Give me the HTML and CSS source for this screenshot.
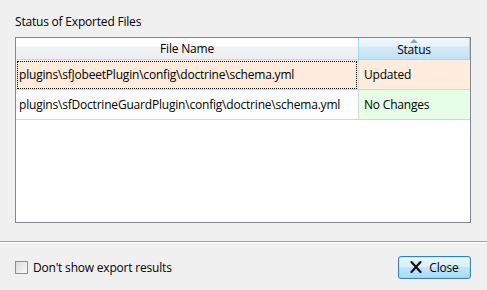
FILE: index.html
```html
<!DOCTYPE html>
<html lang="en">
<head>
    <meta charset="UTF-8">
    <title>Export Results</title>
    <link rel="stylesheet" href="styles.css">
</head>
<body>
    <div class="dialog">
        <div class="content">
            <div class="caption">Status of Exported Files</div>

            <!-- results list -->
            <div class="grid">
                <div class="row head">
                    <div class="cell name">File Name</div>
                    <div class="cell status sorted">
                        <span class="arrow"></span>
                        Status
                    </div>
                </div>
                <div class="row">
                    <div class="cell name focus">plugins\sfJobeetPlugin\config\doctrine\schema.yml</div>
                    <div class="cell status updated">Updated</div>
                </div>
                <div class="row">
                    <div class="cell name">plugins\sfDoctrineGuardPlugin\config\doctrine\schema.yml</div>
                    <div class="cell status same">No Changes</div>
                </div>
            </div>
        </div>

        <div class="footer">
            <label class="check">
                <span class="box"></span>
                Don't show export results
            </label>
            <button class="btn">
                <svg width="12" height="12" viewBox="0 0 12 12">
                    <path d="M1.5 1 L10.5 11 M10.5 1 L1.5 11" stroke="#111" stroke-width="2.2" stroke-linecap="round"/>
                </svg>
                Close
            </button>
        </div>
    </div>
</body>
</html>
```

FILE: styles.css
```css
body {
    margin: 0;
    padding: 0;
    background-color: #f0f0f0;
    font-family: "Open Sans", "Noto Sans", sans-serif;
    font-size: 12px;
    letter-spacing: -0.2px;
    color: #000;
}
* {
    box-sizing: border-box;
}
.dialog {
    width: 487px;
    height: 290px;
    display: flex;
    flex-direction: column;
}
.content {
    padding: 13px 16px 0 15px;
}
.caption {
    height: 17px;
    line-height: 17px;
    margin-bottom: 7px;
}
.grid {
    height: 186px;
    border: 1px solid #828790;
    background: #fff;
}
.row {
    display: flex;
    height: 30px;
}
.cell {
    border-bottom: 1px solid #d5d5d5;
    line-height: 29px;
    padding-left: 3px;
    white-space: nowrap;
}
.name {
    width: 342px;
}
.status {
    flex: 1;
    border-left: 1px solid #d5d5d5;
    padding-left: 5px;
}
.head {
    height: 22px;
}
.head .cell {
    line-height: 20px;
    text-align: center;
    padding: 1px 0 0;
    background: linear-gradient(#ffffff 0%, #ffffff 40%, #f1f2f4 41%, #eceef1 100%);
    border-bottom: 1px solid #d5d5d5;
}
.head .sorted {
    position: relative;
    border: 1px solid #96d9f9;
    border-top: 0;
    padding-top: 2px;
    background: linear-gradient(#f2f9fd 0%, #e4f3fb 40%, #d4ebf8 41%, #c4e2f5 100%);
}
.arrow {
    position: absolute;
    left: 50%;
    top: 1px;
    margin-left: -4px;
    border-left: 4px solid transparent;
    border-right: 4px solid transparent;
    border-bottom: 4px solid #8ba6c0;
}
.focus {
    background: #fdebdc;
    outline: 1px dotted #000;
    outline-offset: -2px;
}
.updated {
    background: #feecdd;
}
.same {
    background: #e6fde6;
}
.footer {
    border-top: 1px solid #a0a0a0;
    box-shadow: inset 0 1px 0 #fff;
    margin-top: 18px;
    flex: 1;
    display: flex;
    justify-content: space-between;
    align-items: center;
    padding: 2px 16px 0 15px;
}
.check {
    display: flex;
    align-items: center;
    gap: 5px;
}
.box {
    width: 13px;
    height: 13px;
    border: 1px solid #8e8f8f;
    background: linear-gradient(135deg, #dcdcdc, #f8f8f8);
}
.btn {
    width: 73px;
    height: 23px;
    border: 1px solid #3c7fb1;
    border-radius: 3px;
    background: linear-gradient(#eaf6fd 0%, #d9f0fc 45%, #bee6fd 50%, #a7d9f5 100%);
    box-shadow: inset 0 0 0 1px #6bd3fd44;
    font-family: inherit;
    font-size: 12px;
    letter-spacing: -0.2px;
    display: flex;
    align-items: center;
    justify-content: center;
    gap: 7px;
    padding: 0;
}
```
